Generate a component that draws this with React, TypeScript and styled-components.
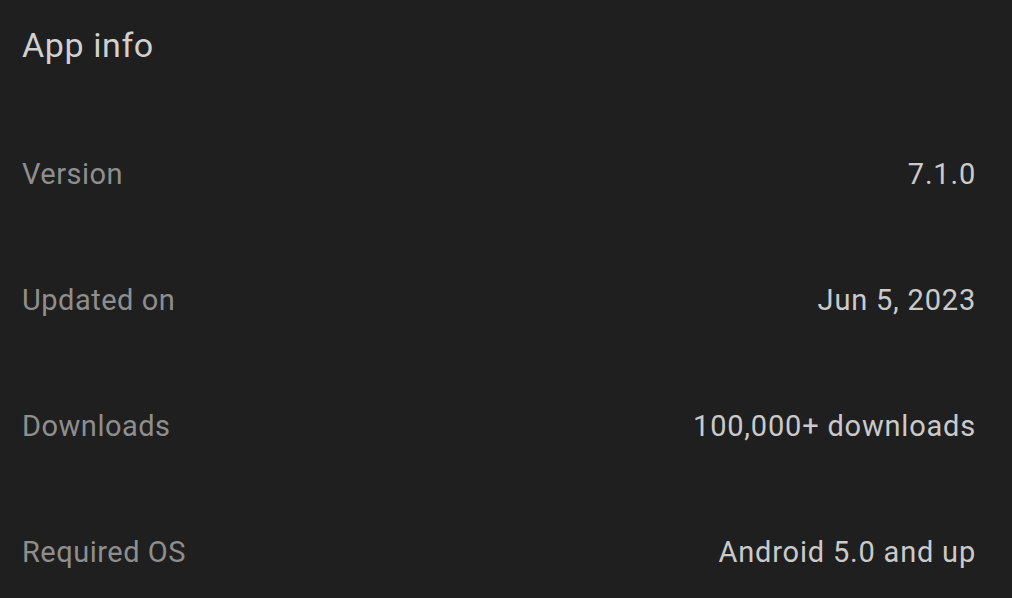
import React from "react";
import styled, { createGlobalStyle } from "styled-components";

const Global = createGlobalStyle`
  html, body {
    margin: 0;
    padding: 0;
    background: #1f1f1f;
  }
  body {
    font-family: Roboto, "Noto Sans", sans-serif;
  }
`;

const Page = styled.div`
  width: 1012px;
  height: 598px;
  background: #1f1f1f;
  box-sizing: border-box;
  padding: 25px 36px 0 22px;
  overflow: hidden;
`;

const Title = styled.h1`
  margin: 0 0 46px 0;
  font-size: 34px;
  line-height: 40px;
  font-weight: 400;
  letter-spacing: 0.6px;
  color: #d0d0d0;
`;

const Row = styled.div`
  display: flex;
  align-items: center;
  justify-content: space-between;
  height: 126px;
`;

const Label = styled.span`
  font-size: 29px;
  letter-spacing: 0.5px;
  color: #8e8e8e;
`;

const Value = styled.span`
  font-size: 29px;
  letter-spacing: 0.8px;
  color: #cacaca;
`;

const rows = [
  ["Version", "7.1.0"],
  ["Updated on", "Jun 5, 2023"],
  ["Downloads", "100,000+ downloads"],
  ["Required OS", "Android 5.0 and up"],
];

export default function App() {
  return (
    <>
      <Global />
      <Page>
        <Title>App info</Title>
        {rows.map(([l, v]) => (
          <Row key={l}>
            <Label>{l}</Label>
            <Value>{v}</Value>
          </Row>
        ))}
      </Page>
    </>
  );
}
